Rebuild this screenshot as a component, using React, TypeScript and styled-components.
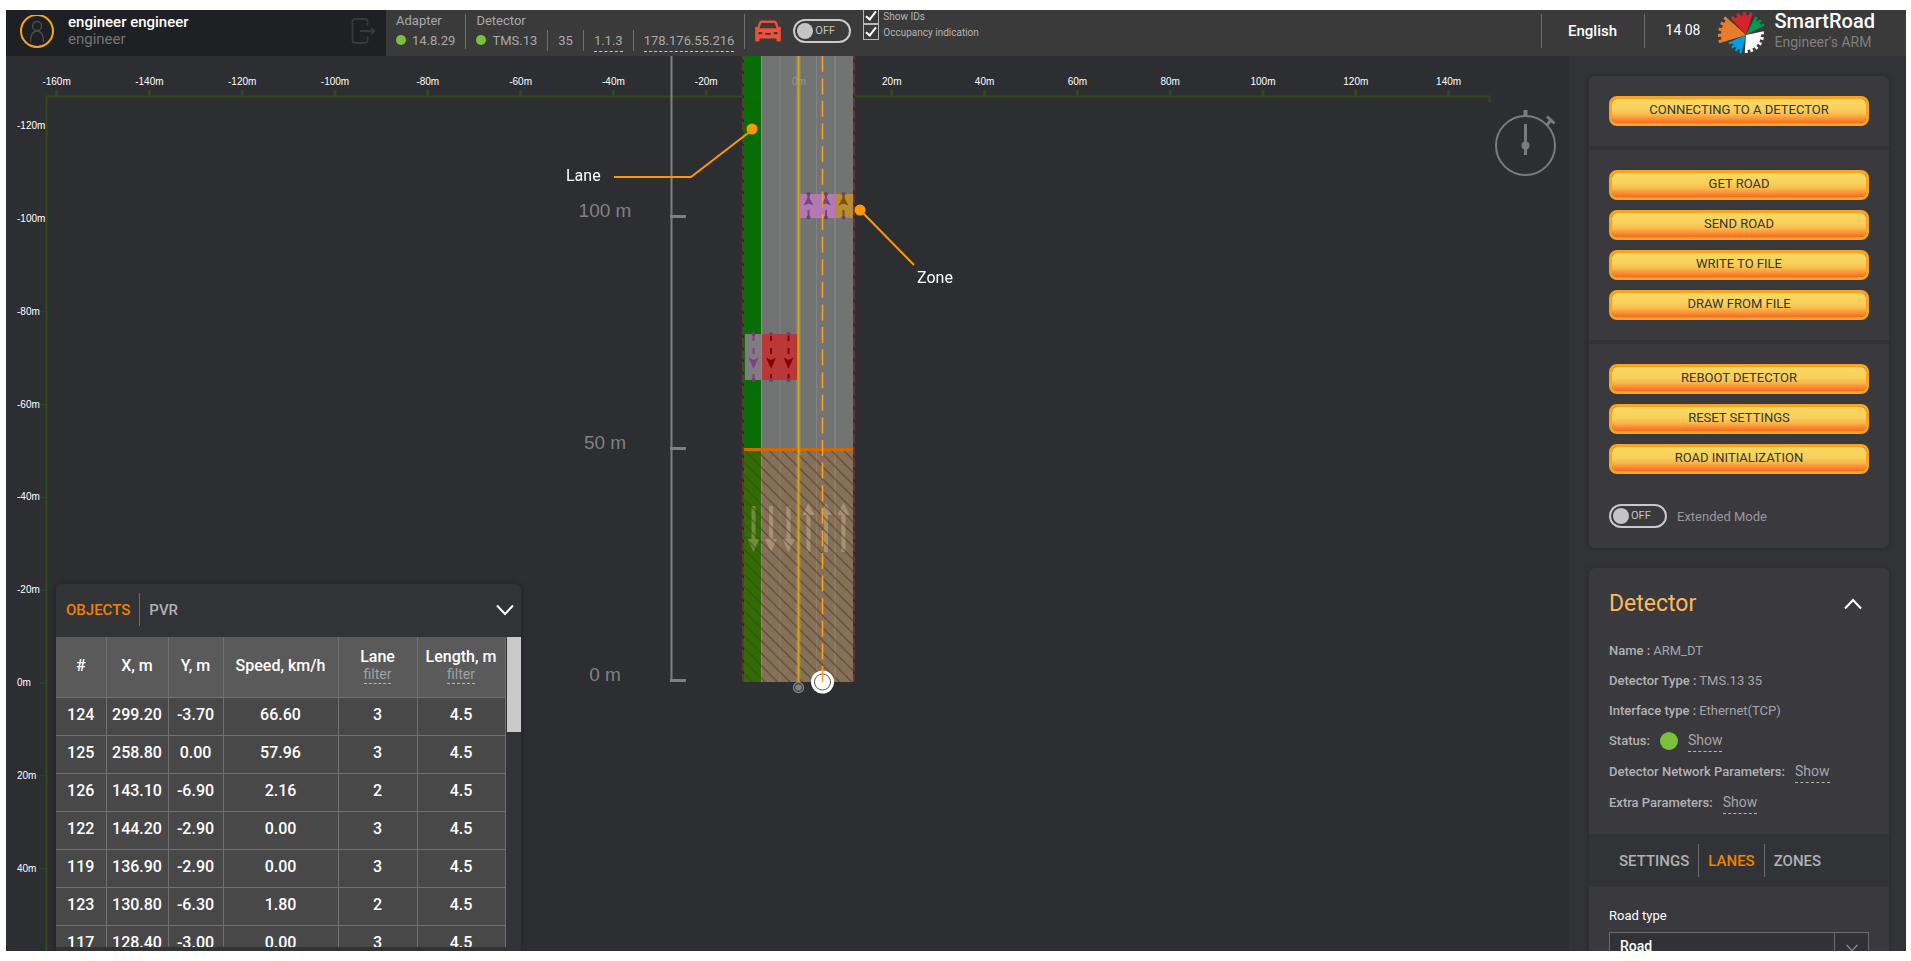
import React, { useId, useState } from "react";
import styled, { createGlobalStyle } from "styled-components";

const c = {
  map: "#2d2e32",
  side: "#323337",
  card: "#39393e",
  bar: "#393a39",
  user: "#1f2023",
  line: "#6d6d70",
  muted: "#a9a9aa",
  scale: "#808080",
  axis: "#31491a",
  orange: "#ef8200",
  callout: "#ff9800",
  green: "#7bc03b",
};

const Global = createGlobalStyle`
  *, *::before, *::after { box-sizing: border-box; }
  body { margin: 0; background: #fff; font-family: Roboto, "Liberation Sans", sans-serif; }
  button, input, select { font-family: inherit; margin: 0; }
  button { padding: 0; border: 0; background: none; cursor: pointer; color: inherit; }
`;

const Shell = styled.div`
  height: calc(100vh - 20px);
  margin: 10px 5px 10px 6px;
  display: flex;
  flex-direction: column;
  overflow: hidden;
  background: ${c.map};
`;

/* ---------- top bar ---------- */

const TopBar = styled.header`
  flex: none;
  height: 46px;
  display: flex;
  overflow: hidden;
  background: ${c.bar};
  color: ${c.muted};
`;

const UserBox = styled.div`
  width: 380px;
  flex: none;
  display: flex;
  align-items: center;
  padding: 0 10px 0 14px;
  background: ${c.user};
`;

const UserNames = styled.div`
  flex: 1;
  margin-left: 14px;
  padding-bottom: 4px;
`;

const UserName = styled.div`
  font-size: 15px;
  line-height: 17px;
  font-weight: 500;
  color: #fff;
`;

const UserRole = styled.div`
  font-size: 15px;
  line-height: 17px;
  color: #737375;
`;

const StatusGroup = styled.div`
  display: flex;
  flex-direction: column;
  padding: 1px 10px 0;
`;

const StatusTitle = styled.div`
  font-size: 13px;
  line-height: 19px;
`;

const StatusRow = styled.div`
  display: flex;
  height: 22px;
`;

const StatusValue = styled.span`
  display: flex;
  align-items: center;
  gap: 6px;
  height: 20px;
  font-size: 13px;
`;

const StatusLink = styled.button`
  height: 22px;
  font-size: 13px;
  line-height: 20px;
  border-bottom: 1px dashed #c8c8c8;
`;

const Dot = styled.span<{ $size: number }>`
  width: ${(p) => p.$size}px;
  height: ${(p) => p.$size}px;
  border-radius: 50%;
  background: ${c.green};
`;

const Divider = styled.span<{ $height: number; $gap?: number }>`
  flex: none;
  width: 1px;
  height: ${(p) => p.$height}px;
  margin: 0 ${(p) => p.$gap ?? 0}px;
  background: ${c.line};
`;

const BarDivider = styled(Divider)`
  margin-top: 4px;
`;

const BarTools = styled.div`
  display: flex;
  align-items: center;
  gap: 12px;
  padding: 0 12px 4px 10px;
`;

const SwitchBox = styled.span`
  display: grid;
  width: 58px;
  height: 24px;
  align-items: center;

  > * {
    grid-area: 1 / 1;
  }
`;

const SwitchInput = styled.input`
  appearance: none;
  width: 58px;
  height: 24px;
  border: 2px solid #c9c9c9;
  border-radius: 12px;
  cursor: pointer;
`;

const SwitchFace = styled.span`
  display: flex;
  align-items: center;
  gap: 2px;
  padding-left: 4px;
  font-size: 11px;
  line-height: 16px;
  color: #c4c4c4;
  pointer-events: none;

  &::before {
    content: "";
    width: 16px;
    height: 16px;
    border-radius: 50%;
    background: #c4c4c4;
  }
`;

const Checks = styled.div`
  margin-top: -2px;
`;

const CheckLabel = styled.label`
  display: flex;
  align-items: center;
  gap: 4px;
  height: 16px;
  font-size: 10px;
  color: #b4b4b4;
`;

const CheckInput = styled.input`
  appearance: none;
  display: grid;
  place-items: center;
  width: 16px;
  height: 16px;
  border: 1px solid #b9b9b9;

  &:checked::after {
    content: "";
    width: 6px;
    height: 11px;
    border: solid #fff;
    border-width: 0 2px 2px 0;
    transform: rotate(38deg);
    margin-bottom: 3px;
  }
`;

const BarRight = styled.div`
  display: flex;
  margin-left: auto;
  padding-right: 31px;
`;

const LanguageButton = styled.button`
  width: 102px;
  height: 42px;
  font-size: 15px;
  font-weight: 500;
  color: #fff;
`;

const Clock = styled.time`
  padding: 0 17px 0 21px;
  font-size: 14px;
  line-height: 41px;
  color: #fff;
`;

const Brand = styled.div`
  margin-left: 9px;
`;

const BrandName = styled.div`
  font-size: 20px;
  line-height: 22px;
  font-weight: 500;
  color: #fff;
`;

const BrandSub = styled.div`
  font-size: 14px;
  line-height: 20px;
  color: #7f7f80;
`;

/* ---------- body ---------- */

const Body = styled.main`
  flex: 1;
  min-height: 0;
  display: flex;
`;

const MapArea = styled.section`
  position: relative;
  flex: 1;
  min-width: 0;
  overflow: hidden;
`;

const Canvas = styled.svg`
  display: block;
  width: 100%;
  height: 100%;
`;

const TimerButton = styled.button`
  position: absolute;
  top: 50px;
  right: 12px;
  width: 64px;
  height: 72px;
`;

const ObjectsPanel = styled.section`
  position: absolute;
  left: 50px;
  bottom: 0;
  width: 465px;
  height: 367px;
  display: flex;
  flex-direction: column;
  padding-bottom: 4px;
  border-radius: 6px 6px 0 0;
  background: ${c.side};
  box-shadow: 0 0 6px rgba(0, 0, 0, 0.3);
`;

const PanelHead = styled.div`
  display: flex;
  align-items: center;
  height: 53px;
  flex: none;
  padding: 0 7px 2px 10px;
`;

const Tab = styled.button<{ $active?: boolean }>`
  font-size: 15px;
  line-height: 20px;
  font-weight: 500;
  color: ${(p) => (p.$active ? c.orange : "#b0b0b0")};
`;

const ToggleButton = styled.button`
  display: flex;
  margin-left: auto;
`;

const TableFrame = styled.div`
  flex: 1;
  min-height: 0;
  display: flex;
  gap: 1px;
  overflow: hidden;
`;

const Table = styled.table`
  width: 449px;
  flex: none;
  align-self: flex-start;
  table-layout: fixed;
  border-collapse: collapse;
  font-size: 16px;
  font-weight: 500;
  color: #fff;
  text-align: center;
  background: #484848;
`;

const Row = styled.tr`
  height: 38px;
`;

const HeadRow = styled.tr`
  height: 60px;
  background: #5a5a5a;
`;

const HeadCell = styled.th`
  padding: 0 0 2px;
  font-size: 16px;
  line-height: 17px;
  font-weight: 500;
  border-bottom: 1px solid #707070;
  border-right: 1px solid #707070;
`;

const Cell = styled.td`
  padding: 0 0 4px;
  border-bottom: 1px solid #707070;
  border-right: 1px solid #707070;
`;

const FilterButton = styled.button`
  font-size: 14px;
  line-height: 18px;
  color: #a0a0a0;
  border-bottom: 1px dashed #b5b5b5;
`;

const ScrollThumb = styled.div`
  width: 15px;
  height: 95px;
  background: #c9c9c9;
`;

/* ---------- side bar ---------- */

const Sidebar = styled.aside`
  flex: none;
  width: 337px;
  padding: 20px 17px 0 20px;
  overflow: hidden;
  background: ${c.side};
`;

const Card = styled.section`
  margin-bottom: 20px;
  border-radius: 6px;
  overflow: hidden;
  background: ${c.card};
  box-shadow: 0 0 6px rgba(0, 0, 0, 0.2);
`;

const Group = styled.div`
  display: flex;
  flex-direction: column;
  gap: 10px;
  padding: 20px;

  & + & {
    border-top: 4px solid ${c.side};
  }
`;

const ActionButton = styled.button`
  height: 30px;
  border: 3px solid #f7a422;
  border-radius: 8px;
  background: linear-gradient(#fbd862 0%, #f9d05c 45%, #f9b94b 65%, #fa6a20 100%) padding-box;
  font-size: 13px;
  line-height: 20px;
  color: #333;
  padding-bottom: 2px;
`;

const ModeLabel = styled.label`
  display: flex;
  align-items: center;
  gap: 10px;
  margin-top: 20px;
  font-size: 13px;
  color: #98989a;
`;

const CardHead = styled.div`
  display: flex;
  align-items: center;
  height: 67px;
  padding: 4px 27px 0 20px;
`;

const CardTitle = styled.h2`
  margin: 0;
  font-size: 23px;
  line-height: 28px;
  font-weight: 400;
  color: #fbb95c;
`;

const Facts = styled.dl`
  margin: 0;
  padding: 0 20px 16px;
  font-size: 13px;
  color: #a5a5a6;
`;

const Fact = styled.div<{ $tall?: boolean }>`
  display: flex;
  align-items: center;
  gap: ${(p) => (p.$tall ? 10 : 3)}px;
  height: ${(p) => (p.$tall ? 31 : 30)}px;
`;

const FactName = styled.dt`
  font-weight: 500;
  color: #b2b2b3;
`;

const FactValue = styled.dd`
  display: flex;
  align-items: center;
  gap: 10px;
  margin: 0;
`;

const ShowButton = styled.button`
  height: 22px;
  font-size: 14px;
  line-height: 18px;
  border-bottom: 1px dashed #b5b5b5;
`;

const TabBar = styled.nav`
  display: flex;
  align-items: center;
  height: 53px;
  padding: 0 30px;
  background: ${c.side};
`;

const Field = styled.div`
  padding: 20px;
`;

const FieldLabel = styled.label`
  display: block;
  height: 25px;
  font-size: 13px;
  line-height: 18px;
  color: #fff;
`;

const SelectBox = styled.div`
  display: grid;
  grid-template-columns: 1fr 34px;
  height: 32px;
  border: 1px solid ${c.line};
  background: #323236;
`;

const Select = styled.select`
  grid-area: 1 / 1 / 2 / 3;
  appearance: none;
  padding: 0 44px 4px 10px;
  border: 0;
  background: none;
  font-size: 14px;
  font-weight: 500;
  color: #fff;
`;

const SelectArrow = styled.span`
  grid-area: 1 / 2;
  display: grid;
  place-items: center;
  border-left: 1px solid ${c.line};
  pointer-events: none;
`;

/* ---------- drawings ---------- */

const Chevron = ({ up, small }: { up?: boolean; small?: boolean }) => (
  <svg width={small ? 12 : 18} height={small ? 10 : 12} viewBox="0 0 18 12" fill="none" aria-hidden="true">
    <path d={up ? "M1 10.500L9 2L17 10.500" : "M1 1.500L9 10L17 1.500"} stroke={small ? "#8a8a8c" : "#fff"} strokeWidth="2" />
  </svg>
);

const Avatar = () => (
  <svg width="34" height="36" viewBox="0 0 34 36" fill="none" aria-hidden="true">
    <circle cx="17" cy="16" r="16" stroke="#f7a623" strokeWidth="2" />
    <g stroke="#4d4d50" strokeWidth="1.300">
      <circle cx="17" cy="11" r="4.500" />
      <path d="M10.500 27C10.500 20 12.500 16 17 16S23.500 20 23.500 27" />
    </g>
  </svg>
);

const LogoutIcon = () => (
  <svg width="25" height="30" viewBox="0 0 25 30" fill="none" stroke="#38393b" strokeWidth="1.800" aria-hidden="true">
    <path d="M16.500 8.500V4.500A2.500 2.500 0 0 0 14 2H4A2.500 2.500 0 0 0 1.500 4.500V23.500A2.500 2.500 0 0 0 4 26H14A2.500 2.500 0 0 0 16.500 23.500V19.500M9 14H23M20 11L23.500 14L20 17" />
  </svg>
);

const CarIcon = () => (
  <svg width="26" height="22" viewBox="0 0 26 22" fill="#f05136" aria-hidden="true">
    <path
      fillRule="evenodd"
      d="M6.500 0.500H19.500Q21.200 .5 21.800 2L24 8L25.800 9.500V20.500Q25.800 21.500 25 21.500H22.500Q21.500 21.500 21.500 20.500V18.500H4.500V20.500Q4.500 21.500 3.500 21.500H1Q.2 21.500 .2 20.500V9.500L2 8L4.200 2Q4.800 .5 6.500 .5ZM7 3Q6.300 3 6 3.700L4.500 8.200H21.500L20 3.700Q19.700 3 19 3ZM3.500 12V14.200H7.200V12ZM18.800 12V14.200H22.500V12ZM10 13V14.800H16V13Z"
    />
    <rect x="0" y="7" width="3" height="2" />
    <rect x="23" y="7" width="3" height="2" />
  </svg>
);

const sectors = [
  { from: 163, to: 222, r: 28, teeth: 5, color: "#e97b2c" },
  { from: 228, to: 287, r: 23, teeth: 4, color: "#d8222a" },
  { from: 297, to: 333, r: 21, teeth: 3, color: "#009b4c" },
  { from: -12, to: 94, r: 18, teeth: 6, color: "#ffffff" },
  { from: 104, to: 157, r: 19, teeth: 4, color: "#009fe0" },
];

const sectorPath = (from: number, to: number, r: number, teeth: number) => {
  const parts = teeth * 2 - 1;
  const step = (to - from) / parts;
  const at = (deg: number, rad: number) => {
    const a = (deg * Math.PI) / 180;
    return `${(rad * Math.cos(a)).toFixed(2)} ${(rad * Math.sin(a)).toFixed(2)}`;
  };
  const pts: string[] = [];
  for (let i = 0; i < parts; i++) {
    const rad = i % 2 === 0 ? r : r - 3;
    pts.push(at(from + i * step, rad), at(from + (i + 1) * step, rad));
  }
  return `M0 0L${pts.join("L")}Z`;
};

const Logo = () => (
  <svg width="48" height="46" viewBox="-29 -25 48 46" aria-hidden="true">
    {sectors.map((s) => (
      <path key={s.color} d={sectorPath(s.from, s.to, s.r, s.teeth)} fill={s.color} />
    ))}
  </svg>
);

const TimerIcon = () => (
  <svg width="64" height="72" viewBox="0 0 64 72" fill="none" stroke="#7b7b7b" aria-hidden="true">
    <circle cx="32.500" cy="39.500" r="29.500" strokeWidth="2" />
    <path d="M32.500 4V11" strokeWidth="4" />
    <path d="M32.500 18V49" strokeWidth="3" />
    <path d="M53.500 19.500L58.500 13.500" strokeWidth="3" />
    <path d="M54 10.500L61.500 17.500" strokeWidth="3" />
    <circle cx="32.500" cy="39.500" r="4" fill="#7b7b7b" stroke="none" />
  </svg>
);

/* ---------- map ---------- */

const PX_PER_M = 4.64;
const ZERO_X = 793;
const ZERO_Y = 627;
const xTicks = [-160, -140, -120, -100, -80, -60, -40, -20, 0, 20, 40, 60, 80, 100, 120, 140];
const yTicks = [-120, -100, -80, -60, -40, -20, 0, 20, 40];
const mx = (m: number) => ZERO_X + m * PX_PER_M;
const my = (m: number) => ZERO_Y + m * PX_PER_M;

const ROAD_BOTTOM = 626;
const downLanes = [747.5, 765, 782.5];
const upLanes = [802.5, 820, 837.5];

const ZoneUp = ({ x, color }: { x: number; color: string }) => (
  <g fill={color}>
    <path d={`M${x} 140L${x + 5} 149.500L${x} 147.500L${x - 5} 149.500Z`} />
    <rect x={x - 1} y="138" width="2" height="5" />
    <rect x={x - 1} y="154" width="2" height="8" />
    <circle cx={x} cy="138" r="2" fill="#70406f" />
    <circle cx={x} cy="161.500" r="2" fill="#70406f" />
  </g>
);

const ZoneDown = ({ x, color }: { x: number; color: string }) => (
  <g fill={color}>
    <rect x={x - 1} y="279" width="2" height="6" />
    <rect x={x - 1} y="292" width="2" height="6" />
    <path d={`M${x - 5} 301.500L${x} 304L${x + 5} 301.500L${x} 313Z`} />
    <rect x={x - 1} y="318" width="2" height="6" />
    <circle cx={x} cy="278" r="2" fill="#70406f" />
    <circle cx={x} cy="324" r="2" fill="#70406f" />
  </g>
);

const RoadMap = () => (
  <Canvas role="img" aria-label="Road map with lanes and zones">
    <defs>
      <pattern id="hatch" width="12.400" height="12.400" patternUnits="userSpaceOnUse" x="738" y="394">
        <path d="M-1 -1L13.400 13.400M-1 11.400L1 13.400M11.400 -1L13.400 1" stroke="#5a3408" strokeWidth="1" />
      </pattern>
      <pattern id="edge" width="3" height="12" patternUnits="userSpaceOnUse">
        <rect width="3" height="12" fill="#63343b" />
        <path d="M0 2L3 6" stroke="#33221f" strokeWidth="1.500" />
      </pattern>
    </defs>

    <g stroke={c.axis} fill="none">
      <path d="M40.500 895V40.500H1483.500V46" strokeWidth="2" />
      {xTicks.map((m) => (
        <path key={m} d={`M${mx(m)} 34V40`} strokeWidth="3" />
      ))}
      {yTicks.map((m) => (
        <path key={m} d={`M33 ${my(m)}H40`} strokeWidth="1" />
      ))}
    </g>
    <g fill="#fff" fontFamily="'Liberation Sans', Arial, sans-serif" fontSize="10">
      {xTicks.map((m) => (
        <text key={m} x={mx(m)} y="29" textAnchor="middle">{`${m}m`}</text>
      ))}
      {yTicks.map((m) => (
        <text key={m} x="11" y={my(m) + 3}>{`${m}m`}</text>
      ))}
    </g>

    <g stroke={c.scale} fill="none">
      <path d="M665.500 0V625" strokeWidth="2" />
      <path d="M664 160.500H680M664 392.500H680M664 624.500H680" strokeWidth="3" />
    </g>
    <g fill={c.scale} fontFamily="'Liberation Sans', Arial, sans-serif" fontSize="19" textAnchor="middle">
      <text x="599" y="161">100 m</text>
      <text x="599" y="393">50 m</text>
      <text x="599" y="625">0 m</text>
    </g>

    <g opacity="0.85">
      <rect x="738" y="0" width="109" height={ROAD_BOTTOM} fill="#7f7f7f" />
      <rect x="738" y="0" width="17" height={ROAD_BOTTOM} fill="#027900" />
    </g>
    <g fill="#a8a8a8" opacity="0.5">
      <rect x="755" y="0" width="1" height={ROAD_BOTTOM} />
      <rect x="773" y="0" width="2" height={ROAD_BOTTOM} opacity="0.3" />
      <rect x="790" y="0" width="5" height={ROAD_BOTTOM} opacity="0.5" />
      <rect x="810" y="0" width="1" height={ROAD_BOTTOM} opacity="0.6" />
      <rect x="828" y="0" width="2" height={ROAD_BOTTOM} opacity="0.5" />
    </g>
    <rect x="736" y="0" width="2" height={ROAD_BOTTOM} fill="url(#edge)" />
    <rect x="847" y="0" width="2" height={ROAD_BOTTOM} fill="url(#edge)" />

    <g fill="#ffefdc" opacity="0.32">
      {downLanes.map((x) => (
        <path key={x} d={`M${x - 2} 450H${x + 2}V483H${x + 6}L${x} 496L${x - 6} 483H${x - 2}Z`} />
      ))}
      {upLanes.map((x) => (
        <path key={x} d={`M${x - 2} 496H${x + 2}V459H${x + 6}L${x} 447L${x - 6} 459H${x - 2}Z`} />
      ))}
    </g>
    <rect x="738" y="394" width="109" height="232" fill="#cd6900" opacity="0.2" />
    <rect x="738" y="394" width="110" height="232" fill="url(#hatch)" opacity="0.8" />
    <rect x="738" y="392" width="109" height="3" fill="#d06a00" />

    <rect x="739" y="278" width="16" height="46" fill="#807a81" />
    <rect x="756" y="278" width="35" height="46" fill="#bb3838" />
    <rect x="794" y="138" width="35" height="24" fill="#b27ab4" />
    <rect x="829" y="138" width="18" height="24" fill="#b88b35" />
    {downLanes.map((x, i) => (
      <ZoneDown key={x} x={x} color={i === 0 ? "#7d427f" : "#820000"} />
    ))}
    {upLanes.map((x, i) => (
      <ZoneUp key={x} x={x} color={i === 2 ? "#7f4e00" : "#7d427f"} />
    ))}

    <path d={`M792.500 0V${ROAD_BOTTOM}`} stroke="#d2a800" strokeWidth="2" />
    <g>
      <circle cx="792.500" cy="631.500" r="5" fill="none" stroke={c.scale} strokeWidth="1.400" />
      <circle cx="792.500" cy="631.500" r="3.300" fill={c.scale} />
      <circle cx="816.500" cy="626" r="11.500" fill="#fff" />
      <circle cx="816.500" cy="626" r="8" fill="none" stroke="#555" strokeWidth="1" />
    </g>
    <path d={`M816.500 ${ROAD_BOTTOM}V0`} stroke="#f7a020" strokeWidth="1.600" strokeDasharray="16 6.600" />

    <g stroke={c.callout} strokeWidth="2" fill="none">
      <path d="M608 121H685L746 74" />
      <path d="M854 154L908 209" />
    </g>
    <circle cx="746" cy="73" r="5.500" fill={c.callout} />
    <circle cx="854" cy="154" r="5.500" fill={c.callout} />
    <g fill="#fff" fontSize="16">
      <text x="560" y="125">Lane</text>
      <text x="911" y="227">Zone</text>
    </g>
  </Canvas>
);

/* ---------- parts ---------- */

const Switch = ({ id, label }: { id: string; label?: string }) => (
  <SwitchBox>
    <SwitchInput id={id} type="checkbox" role="switch" aria-label={label} />
    <SwitchFace aria-hidden="true">OFF</SwitchFace>
  </SwitchBox>
);

const Check = ({ text }: { text: string }) => {
  const id = useId();
  return (
    <CheckLabel htmlFor={id}>
      <CheckInput id={id} type="checkbox" defaultChecked />
      {text}
    </CheckLabel>
  );
};

const rows = [
  ["124", "299.20", "-3.70", "66.60", "3", "4.5"],
  ["125", "258.80", "0.00", "57.96", "3", "4.5"],
  ["126", "143.10", "-6.90", "2.16", "2", "4.5"],
  ["122", "144.20", "-2.90", "0.00", "3", "4.5"],
  ["119", "136.90", "-2.90", "0.00", "3", "4.5"],
  ["123", "130.80", "-6.30", "1.80", "2", "4.5"],
  ["117", "128.40", "-3.00", "0.00", "3", "4.5"],
];

const columns = [
  { title: "#", width: 50 },
  { title: "X, m", width: 62 },
  { title: "Y, m", width: 55 },
  { title: "Speed, km/h", width: 115 },
  { title: "Lane", width: 79, filter: true },
  { title: "Length, m", width: 88, filter: true },
];

const actionGroups = [
  ["CONNECTING TO A DETECTOR"],
  ["GET ROAD", "SEND ROAD", "WRITE TO FILE", "DRAW FROM FILE"],
  ["REBOOT DETECTOR", "RESET SETTINGS", "ROAD INITIALIZATION"],
];

const Header = () => (
  <TopBar>
    <UserBox>
      <Avatar />
      <UserNames>
        <UserName>engineer engineer</UserName>
        <UserRole>engineer</UserRole>
      </UserNames>
      <button type="button" aria-label="Log out">
        <LogoutIcon />
      </button>
    </UserBox>
    <StatusGroup>
      <StatusTitle>Adapter</StatusTitle>
      <StatusRow>
        <StatusValue>
          <Dot $size={10} />
          14.8.29
        </StatusValue>
      </StatusRow>
    </StatusGroup>
    <BarDivider $height={35} />
    <StatusGroup>
      <StatusTitle>Detector</StatusTitle>
      <StatusRow>
        <StatusValue>
          <Dot $size={10} />
          TMS.13
        </StatusValue>
        <Divider $height={21} $gap={10} />
        <StatusValue>35</StatusValue>
        <Divider $height={21} $gap={10} />
        <StatusLink type="button">1.1.3</StatusLink>
        <Divider $height={21} $gap={10} />
        <StatusLink type="button">178.176.55.216</StatusLink>
      </StatusRow>
    </StatusGroup>
    <BarDivider $height={35} />
    <BarTools>
      <CarIcon />
      <Switch id="traffic" label="Traffic" />
    </BarTools>
    <Checks>
      <Check text="Show IDs" />
      <Check text="Occupancy indication" />
    </Checks>
    <BarRight>
      <BarDivider $height={34} />
      <LanguageButton type="button">English</LanguageButton>
      <BarDivider $height={34} />
      <Clock>14 08</Clock>
      <Logo />
      <Brand>
        <BrandName>SmartRoad</BrandName>
        <BrandSub>Engineer's ARM</BrandSub>
      </Brand>
    </BarRight>
  </TopBar>
);

const Objects = () => {
  const [tab, setTab] = useState("OBJECTS");
  return (
    <ObjectsPanel>
      <PanelHead>
        <Tab type="button" $active={tab === "OBJECTS"} onClick={() => setTab("OBJECTS")}>
          OBJECTS
        </Tab>
        <Divider $height={33} $gap={9} />
        <Tab type="button" $active={tab === "PVR"} onClick={() => setTab("PVR")}>
          PVR
        </Tab>
        <ToggleButton type="button" aria-label="Collapse objects">
          <Chevron />
        </ToggleButton>
      </PanelHead>
      <TableFrame>
        <Table>
          <colgroup>
            {columns.map((col) => (
              <col key={col.title} width={col.width} />
            ))}
          </colgroup>
          <thead>
            <HeadRow>
              {columns.map((col) => (
                <HeadCell key={col.title} scope="col">
                  {col.title}
                  {col.filter && (
                    <>
                      <br />
                      <FilterButton type="button">filter</FilterButton>
                    </>
                  )}
                </HeadCell>
              ))}
            </HeadRow>
          </thead>
          <tbody>
            {rows.map((row) => (
              <Row key={row[0]}>
                {row.map((value, i) => (
                  <Cell key={i}>{value}</Cell>
                ))}
              </Row>
            ))}
          </tbody>
        </Table>
        <ScrollThumb />
      </TableFrame>
    </ObjectsPanel>
  );
};

const DetectorCard = () => {
  const [tab, setTab] = useState("LANES");
  return (
    <Card>
      <CardHead>
        <CardTitle>Detector</CardTitle>
        <ToggleButton type="button" aria-label="Collapse detector">
          <Chevron up />
        </ToggleButton>
      </CardHead>
      <Facts>
        <Fact>
          <FactName>Name :</FactName>
          <FactValue>ARM_DT</FactValue>
        </Fact>
        <Fact>
          <FactName>Detector Type :</FactName>
          <FactValue>TMS.13 35</FactValue>
        </Fact>
        <Fact>
          <FactName>Interface type :</FactName>
          <FactValue>Ethernet(TCP)</FactValue>
        </Fact>
        <Fact $tall>
          <FactName>Status:</FactName>
          <FactValue>
            <Dot $size={18} />
            <ShowButton type="button">Show</ShowButton>
          </FactValue>
        </Fact>
        <Fact $tall>
          <FactName>Detector Network Parameters:</FactName>
          <FactValue>
            <ShowButton type="button">Show</ShowButton>
          </FactValue>
        </Fact>
        <Fact $tall>
          <FactName>Extra Parameters:</FactName>
          <FactValue>
            <ShowButton type="button">Show</ShowButton>
          </FactValue>
        </Fact>
      </Facts>
      <TabBar>
        {["SETTINGS", "LANES", "ZONES"].map((name, i) => (
          <React.Fragment key={name}>
            {i > 0 && <Divider $height={33} $gap={9} />}
            <Tab type="button" $active={tab === name} onClick={() => setTab(name)}>
              {name}
            </Tab>
          </React.Fragment>
        ))}
      </TabBar>
      <Field>
        <FieldLabel htmlFor="road-type">Road type</FieldLabel>
        <SelectBox>
          <Select id="road-type" defaultValue="Road">
            <option>Road</option>
          </Select>
          <SelectArrow>
            <Chevron small />
          </SelectArrow>
        </SelectBox>
      </Field>
    </Card>
  );
};

export default function App() {
  return (
    <>
      <Global />
      <Shell>
        <Header />
        <Body>
          <MapArea>
            <RoadMap />
            <TimerButton type="button" aria-label="Timer">
              <TimerIcon />
            </TimerButton>
            <Objects />
          </MapArea>
          <Sidebar>
            <Card>
              {actionGroups.map((group, i) => (
                <Group key={group[0]}>
                  {group.map((name) => (
                    <ActionButton key={name} type="button">
                      {name}
                    </ActionButton>
                  ))}
                  {i === actionGroups.length - 1 && (
                    <ModeLabel htmlFor="extended-mode">
                      <Switch id="extended-mode" />
                      Extended Mode
                    </ModeLabel>
                  )}
                </Group>
              ))}
            </Card>
            <DetectorCard />
          </Sidebar>
        </Body>
      </Shell>
    </>
  );
}
